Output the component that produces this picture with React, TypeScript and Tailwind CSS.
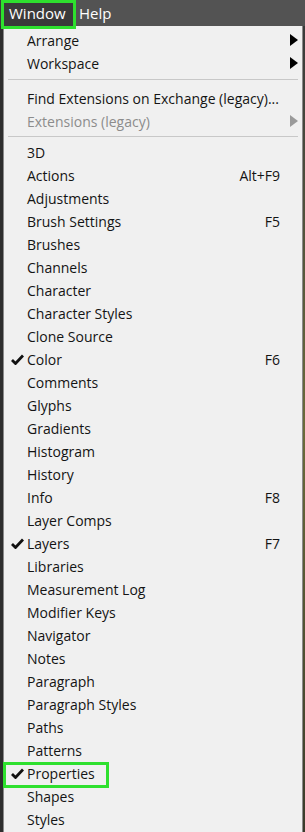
const items: { label: string; key?: string; check?: boolean }[] = [
  { label: '3D' },
  { label: 'Actions', key: 'Alt+F9' },
  { label: 'Adjustments' },
  { label: 'Brush Settings', key: 'F5' },
  { label: 'Brushes' },
  { label: 'Channels' },
  { label: 'Character' },
  { label: 'Character Styles' },
  { label: 'Clone Source' },
  { label: 'Color', key: 'F6', check: true },
  { label: 'Comments' },
  { label: 'Glyphs' },
  { label: 'Gradients' },
  { label: 'Histogram' },
  { label: 'History' },
  { label: 'Info', key: 'F8' },
  { label: 'Layer Comps' },
  { label: 'Layers', key: 'F7', check: true },
  { label: 'Libraries' },
  { label: 'Measurement Log' },
  { label: 'Modifier Keys' },
  { label: 'Navigator' },
  { label: 'Notes' },
  { label: 'Paragraph' },
  { label: 'Paragraph Styles' },
  { label: 'Paths' },
  { label: 'Patterns' },
  { label: 'Properties', check: true },
  { label: 'Shapes' },
  { label: 'Styles' },
];

const Check = () => (
  <svg width="13" height="11" viewBox="0 0 13 11" className="absolute left-[7px] top-[6px]">
    <path d="M1 6 L4.5 9.5 L12 1.5" fill="none" stroke="#111" strokeWidth="2.8" strokeLinejoin="miter" />
  </svg>
);

const Arrow = ({ dim }: { dim?: boolean }) => (
  <svg width="8" height="12" viewBox="0 0 8 12" className="absolute left-[286px] top-[5px]">
    <path d="M0 0 L8 6 L0 12 Z" fill={dim ? '#9a9a9a' : '#000'} />
  </svg>
);

const Row = ({ label, k, check, sub, dim }: { label: string; k?: string; check?: boolean; sub?: boolean; dim?: boolean }) => (
  <div className={`relative h-[23px] flex items-center pl-[23px] pr-[22px] ${dim ? 'text-[#8c8c8c]' : 'text-[#141414]'}`}>
    {check && <Check />}
    <span className="flex-1 whitespace-nowrap">{label}</span>
    {k && <span className="whitespace-nowrap">{k}</span>}
    {sub && <Arrow dim={dim} />}
  </div>
);

const Sep = ({ cls }: { cls: string }) => <div className={`h-px bg-[#c8c8c8] mx-[4px] ${cls}`}></div>;

export default function App() {
  return (
    <div className="w-[305px] h-[832px] bg-[#2e2e2e] relative overflow-hidden" style={{ fontFamily: '"Open Sans", "Noto Sans", sans-serif' }}>
      <div className="h-[26px] bg-[#535353] flex items-center text-white text-[15px]">
        <div className="h-[26px] w-[74px] bg-[#3a3a3a] flex items-center pl-[9px]">Window</div>
        <div className="pl-[5px]">Help</div>
      </div>
      <div className="flex">
        <div className="w-[3px]"></div>
        <div className="w-[300px] bg-[#f0f0f0] border-l border-r border-[#8a8a8a] text-[14px] pt-[3px]">
          <Row label="Arrange" sub />
          <Row label="Workspace" sub />
          <Sep cls="mt-[4px] mb-[7px]" />
          <Row label="Find Extensions on Exchange (legacy)..." />
          <Row label="Extensions (legacy)" sub dim />
          <Sep cls="mt-[3px] mb-[4px]" />
          {items.map((it) => (
            <Row key={it.label} label={it.label} k={it.key} check={it.check} />
          ))}
        </div>
        <div className="w-[2px] h-[806px] bg-gradient-to-b from-[#3a3a3a] via-[#6b6a3a] to-[#3a3a2a]"></div>
      </div>
      <div className="absolute left-[1px] top-0 w-[75px] h-[29px] border-[3px] border-[#2ee02e]"></div>
      <div className="absolute left-[3px] top-[762px] w-[106px] h-[26px] border-[3px] border-[#2ee02e]"></div>
    </div>
  );
}
